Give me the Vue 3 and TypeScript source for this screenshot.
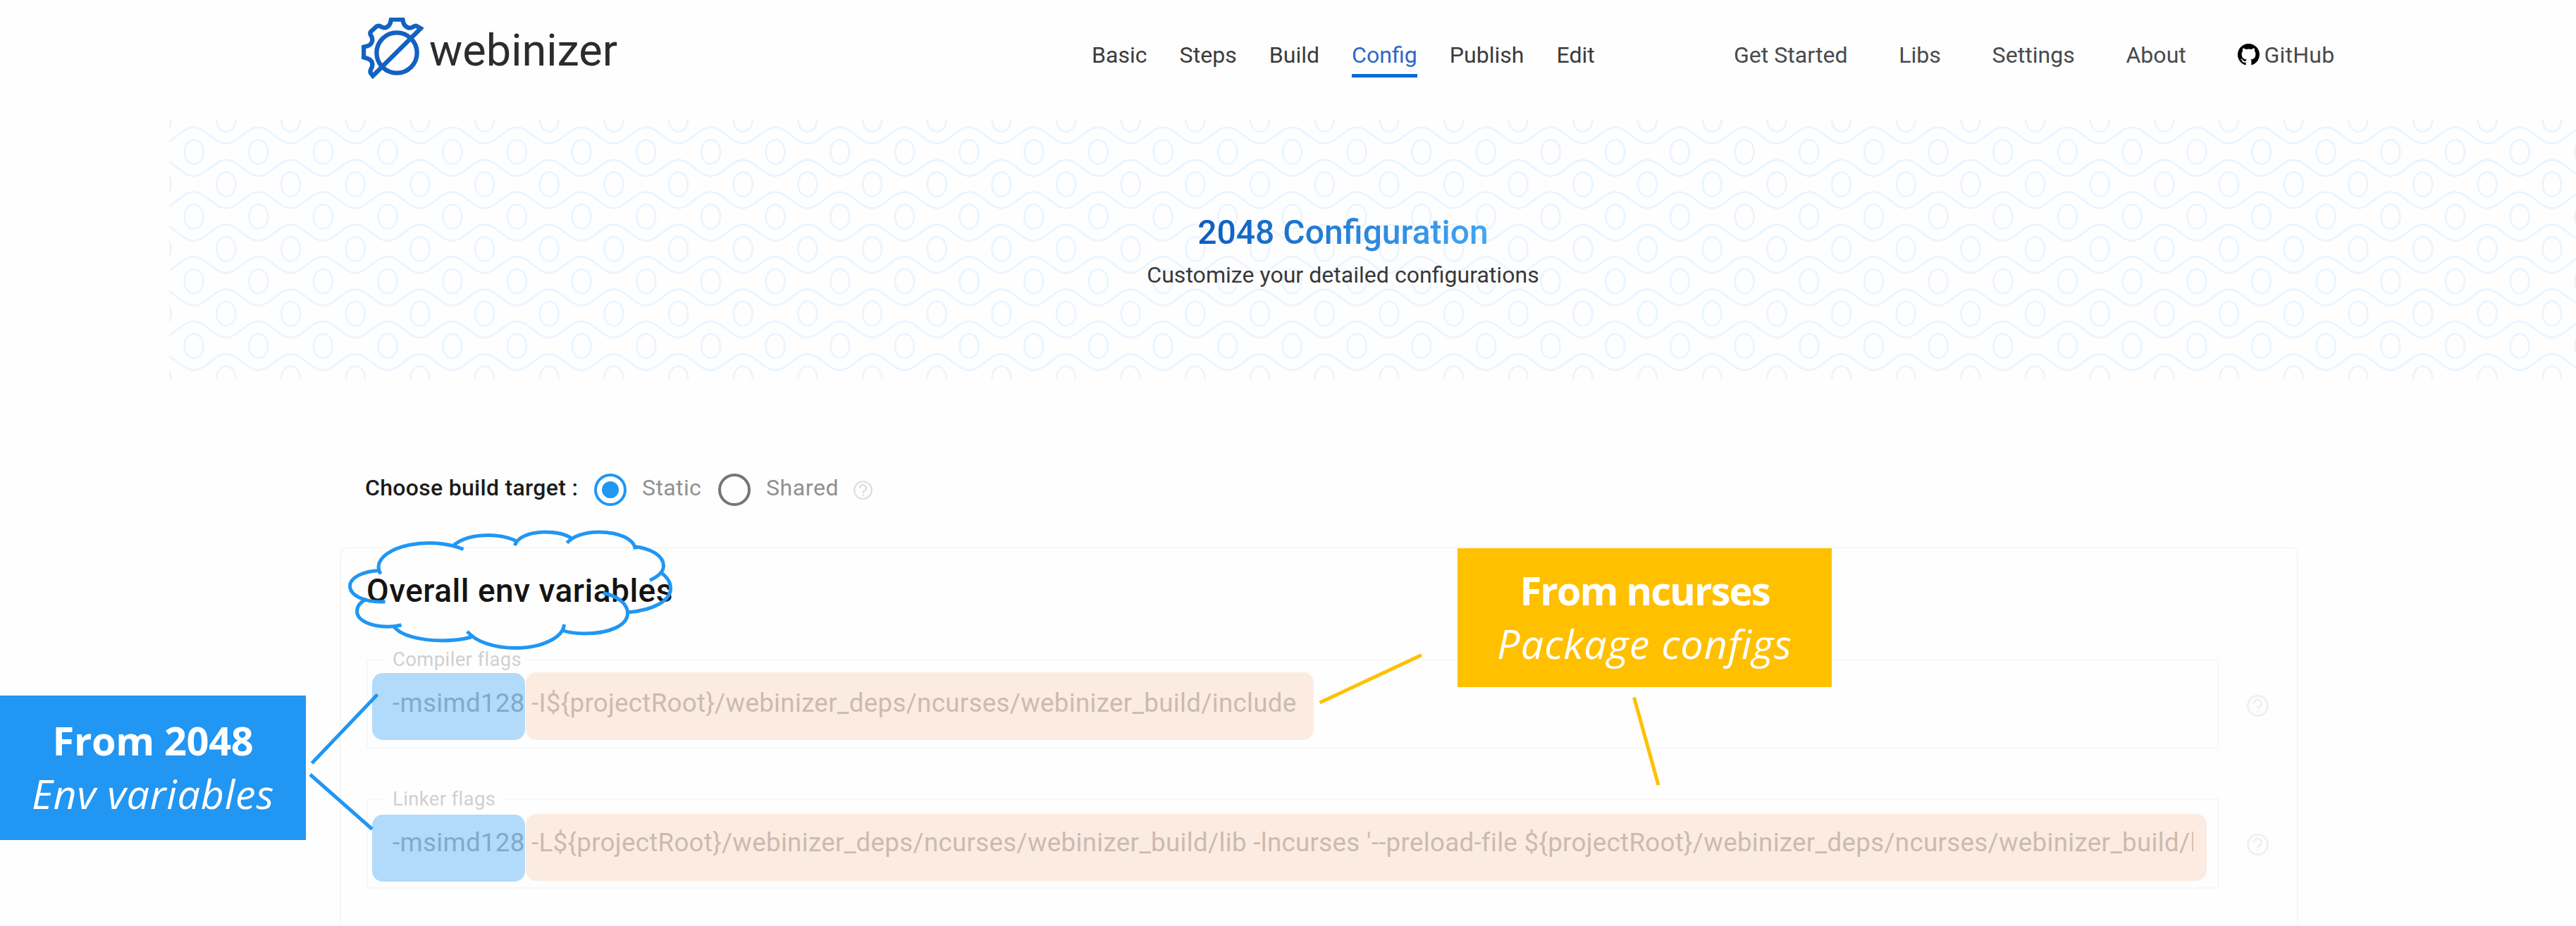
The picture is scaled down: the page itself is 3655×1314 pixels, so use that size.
<script setup lang="ts">
interface Field {
  label: string
  value: string
  tone: string
}

const mainNav = ['Basic', 'Steps', 'Build', 'Config', 'Publish', 'Edit']
const active = 'Config'
const sideNav = ['Get Started', 'Libs', 'Settings', 'About']

const fields: Field[] = [
  {
    label: 'Compiler flags',
    value: '-msimd128 -I${projectRoot}/webinizer_deps/ncurses/webinizer_build/include',
    tone: 'compiler',
  },
  {
    label: 'Linker flags',
    value:
      "-msimd128 -L${projectRoot}/webinizer_deps/ncurses/webinizer_build/lib -lncurses '--preload-file ${projectRoot}/webinizer_deps/ncurses/webinizer_build/l",
    tone: 'linker',
  },
]
</script>

<template>
  <div class="page">
    <header class="header">
      <div class="brand">
        <svg class="gear" viewBox="70 45 264 262" fill="none" stroke="#1262c1" stroke-width="19">
          <circle cx="220" cy="195" r="86" />
          <path
            d="M118 293 L322 91 L306 82 Q300 78 290 84 Q277 92 266 87 Q252 81 248 66 L245 53 H196 L193 66 Q187 84 171 88 Q162 89 152 83 Q142 77 133 83 L110 104 Q104 111 110 121 Q118 132 115 146 Q110 162 95 166 L79 170 V214 L95 219 Q111 224 115 238 Q118 252 111 263 Q104 273 110 283 Z"
          />
        </svg>
        <span class="name">webinizer</span>
      </div>
      <nav class="nav main">
        <a v-for="n in mainNav" :key="n" :class="{ active: n === active }">{{ n }}</a>
      </nav>
      <nav class="nav side">
        <a v-for="n in sideNav" :key="n">{{ n }}</a>
        <a class="github">
          <svg viewBox="0 0 16 16" fill="#000">
            <path
              d="M8 0C3.58 0 0 3.58 0 8c0 3.54 2.29 6.53 5.47 7.59.4.07.55-.17.55-.38 0-.19-.01-.82-.01-1.49-2.01.37-2.53-.49-2.69-.94-.09-.23-.48-.94-.82-1.13-.28-.15-.68-.52-.01-.53.63-.01 1.08.58 1.23.82.72 1.21 1.87.87 2.33.66.07-.52.28-.87.51-1.07-1.78-.2-3.64-.89-3.64-3.95 0-.87.31-1.59.82-2.15-.08-.2-.36-1.02.08-2.12 0 0 .67-.21 2.2.82.64-.18 1.32-.27 2-.27s1.36.09 2 .27c1.53-1.04 2.2-.82 2.2-.82.44 1.1.16 1.92.08 2.12.51.56.82 1.27.82 2.15 0 3.07-1.87 3.75-3.65 3.95.29.25.54.73.54 1.48 0 1.07-.01 1.93-.01 2.2 0 .21.15.46.55.38A8.01 8.01 0 0 0 16 8c0-4.42-3.58-8-8-8z"
            />
          </svg>
          <span>GitHub</span>
        </a>
      </nav>
    </header>

    <section class="banner">
      <svg class="waves" width="3415" height="368" fill="none" stroke="#e8f4fe" stroke-width="2.6">
        <defs>
          <pattern id="waves" x="-10.83" y="-0.8" width="91.67" height="91.8" patternUnits="userSpaceOnUse">
            <path d="M0 34.3 C16.5 34.3 29 11.5 45.83 11.5 C62.5 11.5 75 34.3 91.67 34.3" />
            <path d="M0 57.8 C16.5 57.8 29 80.6 45.83 80.6 C62.5 80.6 75 57.8 91.67 57.8" />
            <rect x="32.6" y="29.2" width="26.6" height="34.4" rx="13.3" ry="16" />
            <rect x="-13.3" y="-16.7" width="26.6" height="34.4" rx="13.3" ry="16" />
            <rect x="78.37" y="-16.7" width="26.6" height="34.4" rx="13.3" ry="16" />
            <rect x="-13.3" y="75.1" width="26.6" height="34.4" rx="13.3" ry="16" />
            <rect x="78.37" y="75.1" width="26.6" height="34.4" rx="13.3" ry="16" />
          </pattern>
        </defs>
        <rect width="3415" height="368" fill="url(#waves)" stroke="none" />
      </svg>
      <h1>2048 Configuration</h1>
      <p>Customize your detailed configurations</p>
    </section>

    <div class="target">
      <span class="question">Choose build target :</span>
      <span class="radio on"></span>
      <span class="option static">Static</span>
      <span class="radio"></span>
      <span class="option shared">Shared</span>
      <svg class="help" viewBox="0 0 30 30" fill="none" stroke="#dcdcdc" stroke-width="2.4">
        <circle cx="15" cy="15" r="13.6" />
        <path d="M10 12 a5 5 0 1 1 7.6 4 Q15 17.400 15 19.500" />
        <path d="M15 21.700 v2.700" />
      </svg>
    </div>

    <section class="card">
      <h2>Overall env variables</h2>
      <div v-for="f in fields" :key="f.label" class="row">
        <div class="field">
          <span class="label">{{ f.label }}</span>
          <div class="value">{{ f.value }}</div>
          <i class="mark own" :class="f.tone"></i>
          <i class="mark dep" :class="f.tone"></i>
        </div>
        <svg class="help" viewBox="0 0 30 30" fill="none" stroke="#efefef" stroke-width="2.6">
          <circle cx="15" cy="15" r="13.6" />
          <path d="M10 12 a5 5 0 1 1 7.6 4 Q15 17.400 15 19.500" />
          <path d="M15 21.700 v2.700" />
        </svg>
      </div>
    </section>

    <svg class="ink" width="3655" height="1314" fill="none" stroke-width="5">
      <g stroke="#2196f3">
        <path d="M540 814.500 Q537 809 537 804 A72 34.500 0 0 1 657.500 779.500" />
        <path d="M643.500 774 C655 764 672 759.500 693 759.500 C708 759.500 722 762.500 733 768" />
        <path d="M730.500 774 C734 762 752 755 773 755 C788 755 802 757.500 811 764" />
        <path d="M804.500 770.500 C812 761 830 755 850 755 C878 755 900 765 901.500 779.500" />
        <path d="M899 775.500 C924 778 941.500 789 941.500 803 C941.500 811 934 818 922 823.500" />
        <path d="M937 812 C946 818 951.500 826 951.500 835 C951.500 852 928 866 890 869" />
        <path d="M856 841.500 C877 846 890.500 857 890.500 870 C890.500 887 866 899 829 899 C817 899 807 897.500 798 894.500" />
        <path d="M800.500 886 C799 905 768 919.500 732 919.500 C702 919.500 675 911 663 896" />
        <path d="M669 904 C656 907.500 643 909 628 909 C595 909 566 901 558.500 888" />
        <path d="M569.500 887 C563 888.500 557 889.300 550 889.300 C525 889.300 506.500 880 506.500 867.500 C506.500 860.500 511 854.500 520 850" />
        <path d="M546.500 853.800 C517 855 496.500 845 496.500 831.500 C496.500 819.500 515 810.500 539 809.500" />
        <path d="M442.500 1083 L535.500 985.500" />
        <path d="M440 1099 L528 1176.500" />
      </g>
      <g stroke="#ffc000">
        <path d="M1872.500 997 L2017 929.500" />
        <path d="M2318.500 989.500 L2353 1114" />
      </g>
    </svg>

    <aside class="note blue">
      <b>From 2048</b>
      <i>Env variables</i>
    </aside>
    <aside class="note amber">
      <b>From ncurses</b>
      <i>Package configs</i>
    </aside>
  </div>
</template>

<style>
body {
  background: #fefefe;
}
</style>

<style scoped>
.page {
  position: relative;
  width: 3655px;
  height: 1314px;
  overflow: hidden;
  background: #fefefe;
  font-family: Roboto, "Liberation Sans", sans-serif;
  color: #3c3c3c;
}

.header {
  display: flex;
  align-items: flex-start;
  box-sizing: border-box;
  height: 170px;
  padding-left: 513px;
}
.brand {
  display: flex;
  width: 1036px;
}
.gear {
  width: 88px;
  height: 87.300px;
  margin-top: 25px;
}
.name {
  margin: 36.500px 0 0 8px;
  font-size: 63px;
  line-height: 70px;
  color: #2c2c2c;
}
.nav {
  display: flex;
  margin-top: 58px;
  font-size: 32.100px;
  line-height: 40px;
  white-space: nowrap;
}
.main {
  gap: 46px;
  width: 911px;
}
.main a {
  padding-bottom: 7px;
}
.main .active {
  color: #2e68c8;
  border-bottom: 5px solid #0b6bd3;
}
.side {
  gap: 72.700px;
  color: #484a4e;
}
.github {
  display: flex;
  gap: 7px;
  letter-spacing: 0.200px;
}
.github svg {
  width: 31px;
  height: 31px;
  margin-top: 3.500px;
}

.banner {
  position: relative;
  box-sizing: border-box;
  width: 3415px;
  height: 368px;
  margin-left: 240px;
  padding: 131.500px 84px 0 0;
  text-align: center;
}
.waves {
  position: absolute;
  inset: 0;
}
h1 {
  position: relative;
  width: max-content;
  margin: 0 auto;
  font-size: 48px;
  line-height: 56px;
  font-weight: 500;
  color: transparent;
  background: linear-gradient(90deg, #0d5dbd, #42a5f5);
  background-clip: text;
}
.banner p {
  position: relative;
  margin: 12px 0 0;
  font-size: 32.100px;
  line-height: 40px;
  color: #383838;
}

.target {
  display: flex;
  align-items: center;
  height: 46px;
  margin: 134px 0 0 518px;
  font-size: 32px;
  line-height: 40px;
  white-space: nowrap;
}
.question {
  width: 325px;
  margin-top: -6px;
  font-weight: 500;
  letter-spacing: 0.300px;
  color: #1c1c1c;
}
.radio {
  display: flex;
  align-items: center;
  justify-content: center;
  box-sizing: border-box;
  width: 46px;
  height: 46px;
  border: 4.500px solid #757575;
  border-radius: 50%;
}
.radio.on {
  border-color: #2196f3;
}
.radio.on::before {
  content: "";
  width: 24px;
  height: 24px;
  border-radius: 50%;
  background: #2196f3;
}
.option {
  margin: -6px 0 0 22px;
  color: #909090;
}
.static {
  width: 108px;
  letter-spacing: 0.400px;
}
.shared {
  width: 124px;
  letter-spacing: 0.600px;
}
.target .help {
  width: 27px;
  height: 27px;
}

.card {
  box-sizing: border-box;
  width: 2779px;
  height: 560px;
  margin: 58px 0 0 482px;
  padding: 35px 0 0 36px;
  border: 2px solid #f6f6f6;
  border-radius: 10px;
}
h2 {
  margin: 0 0 72px;
  font-size: 46px;
  line-height: 50px;
  font-weight: 500;
  letter-spacing: 0.500px;
  color: #141414;
  white-space: nowrap;
}
.row {
  display: flex;
  align-items: center;
  gap: 40px;
  margin-bottom: 69.500px;
}
.row .help {
  width: 31px;
  height: 31px;
  margin-top: 4px;
}
.field {
  position: relative;
  box-sizing: border-box;
  width: 2628px;
  height: 128px;
  padding: 39px 34px 0 35px;
  border: 2px solid #f7f7f7;
}
.value {
  overflow: hidden;
  width: 2555px;
  font-size: 36.700px;
  line-height: 44px;
  letter-spacing: 0.310px;
  white-space: nowrap;
  color: #b4b4b4;
}
.label {
  position: absolute;
  top: -17px;
  left: 26px;
  padding: 0 9px;
  background: #fefefe;
  font-size: 27.500px;
  line-height: 32px;
  letter-spacing: 0.360px;
  color: #d0d0d0;
}
.mark {
  position: absolute;
  border-radius: 15px;
}
.own {
  left: 6px;
  width: 217px;
  height: 95px;
  background: rgba(33, 150, 243, 0.34);
}
.dep {
  left: 224px;
  width: 1118px;
  height: 96px;
  background: rgba(249, 199, 170, 0.34);
}
.own.compiler {
  top: 18px;
}
.dep.compiler {
  top: 17px;
}
.own.linker {
  top: 21px;
}
.dep.linker {
  top: 20px;
  width: 2385px;
  height: 95px;
}

.ink {
  position: absolute;
  top: 0;
  left: 0;
}

.note {
  position: absolute;
  display: flex;
  flex-direction: column;
  align-items: center;
  box-sizing: border-box;
  font-family: "Open Sans", "Noto Sans", sans-serif;
  font-size: 56px;
  line-height: 76px;
  white-space: nowrap;
  color: #fff;
}
.note i {
  font-size: 57.500px;
  letter-spacing: 0.750px;
}
.blue {
  top: 987px;
  left: 0;
  width: 434px;
  height: 205px;
  padding-top: 25px;
  background: #2196f3;
}
.blue b {
  letter-spacing: -0.400px;
}
.amber {
  top: 778px;
  left: 2068px;
  width: 531px;
  height: 197px;
  padding-top: 21px;
  background: #ffc000;
}
.amber b {
  letter-spacing: -1.900px;
}
.amber i {
  letter-spacing: 1px;
}
</style>
